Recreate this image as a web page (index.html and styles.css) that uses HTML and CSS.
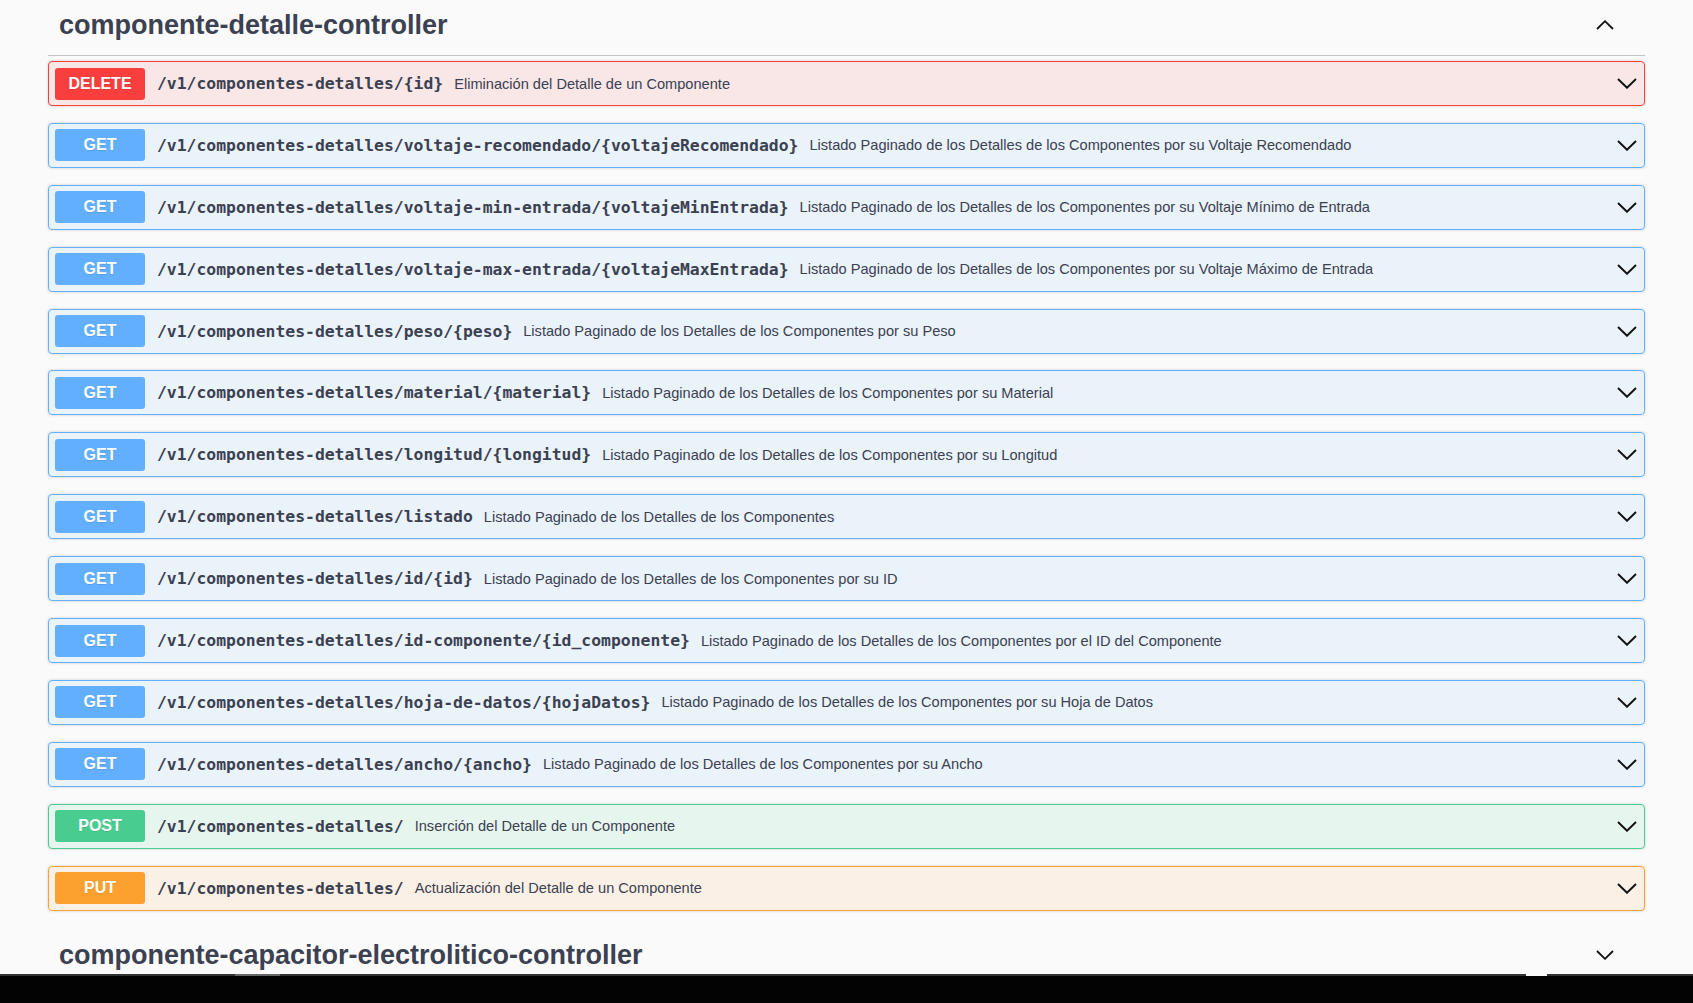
FILE: index.html
```html
<!DOCTYPE html>
<html lang="es">
<head>
<meta charset="utf-8">
<title>componente-detalle-controller</title>
<link rel="stylesheet" href="styles.css">
</head>
<body>
<div class="screen">
  <main class="page">
    <section class="tag">
      <h3 class="tag-head">
        <span class="tag-name">componente-detalle-controller</span>
        <svg class="tag-arrow" viewBox="0 0 18 10" width="18" height="10"><polyline points="1,9 9,1.2 17,9" fill="none" stroke="#111" stroke-width="1.8"/></svg>
      </h3>
      <div class="ops">
        <div class="op op-delete"><span class="method">DELETE</span><span class="path">/v1/componentes-detalles/{id}</span><span class="desc">Eliminación del Detalle de un Componente</span><svg class="op-arrow" viewBox="0 0 20 11" width="20" height="11"><polyline points="1,1 10,9.8 19,1" fill="none" stroke="#111" stroke-width="1.9"/></svg></div>
        <div class="op op-get"><span class="method">GET</span><span class="path">/v1/componentes-detalles/voltaje-recomendado/{voltajeRecomendado}</span><span class="desc">Listado Paginado de los Detalles de los Componentes por su Voltaje Recomendado</span><svg class="op-arrow" viewBox="0 0 20 11" width="20" height="11"><polyline points="1,1 10,9.8 19,1" fill="none" stroke="#111" stroke-width="1.9"/></svg></div>
        <div class="op op-get"><span class="method">GET</span><span class="path">/v1/componentes-detalles/voltaje-min-entrada/{voltajeMinEntrada}</span><span class="desc">Listado Paginado de los Detalles de los Componentes por su Voltaje Mínimo de Entrada</span><svg class="op-arrow" viewBox="0 0 20 11" width="20" height="11"><polyline points="1,1 10,9.8 19,1" fill="none" stroke="#111" stroke-width="1.9"/></svg></div>
        <div class="op op-get"><span class="method">GET</span><span class="path">/v1/componentes-detalles/voltaje-max-entrada/{voltajeMaxEntrada}</span><span class="desc">Listado Paginado de los Detalles de los Componentes por su Voltaje Máximo de Entrada</span><svg class="op-arrow" viewBox="0 0 20 11" width="20" height="11"><polyline points="1,1 10,9.8 19,1" fill="none" stroke="#111" stroke-width="1.9"/></svg></div>
        <div class="op op-get"><span class="method">GET</span><span class="path">/v1/componentes-detalles/peso/{peso}</span><span class="desc">Listado Paginado de los Detalles de los Componentes por su Peso</span><svg class="op-arrow" viewBox="0 0 20 11" width="20" height="11"><polyline points="1,1 10,9.8 19,1" fill="none" stroke="#111" stroke-width="1.9"/></svg></div>
        <div class="op op-get"><span class="method">GET</span><span class="path">/v1/componentes-detalles/material/{material}</span><span class="desc">Listado Paginado de los Detalles de los Componentes por su Material</span><svg class="op-arrow" viewBox="0 0 20 11" width="20" height="11"><polyline points="1,1 10,9.8 19,1" fill="none" stroke="#111" stroke-width="1.9"/></svg></div>
        <div class="op op-get"><span class="method">GET</span><span class="path">/v1/componentes-detalles/longitud/{longitud}</span><span class="desc">Listado Paginado de los Detalles de los Componentes por su Longitud</span><svg class="op-arrow" viewBox="0 0 20 11" width="20" height="11"><polyline points="1,1 10,9.8 19,1" fill="none" stroke="#111" stroke-width="1.9"/></svg></div>
        <div class="op op-get"><span class="method">GET</span><span class="path">/v1/componentes-detalles/listado</span><span class="desc">Listado Paginado de los Detalles de los Componentes</span><svg class="op-arrow" viewBox="0 0 20 11" width="20" height="11"><polyline points="1,1 10,9.8 19,1" fill="none" stroke="#111" stroke-width="1.9"/></svg></div>
        <div class="op op-get"><span class="method">GET</span><span class="path">/v1/componentes-detalles/id/{id}</span><span class="desc">Listado Paginado de los Detalles de los Componentes por su ID</span><svg class="op-arrow" viewBox="0 0 20 11" width="20" height="11"><polyline points="1,1 10,9.8 19,1" fill="none" stroke="#111" stroke-width="1.9"/></svg></div>
        <div class="op op-get"><span class="method">GET</span><span class="path">/v1/componentes-detalles/id-componente/{id_componente}</span><span class="desc">Listado Paginado de los Detalles de los Componentes por el ID del Componente</span><svg class="op-arrow" viewBox="0 0 20 11" width="20" height="11"><polyline points="1,1 10,9.8 19,1" fill="none" stroke="#111" stroke-width="1.9"/></svg></div>
        <div class="op op-get"><span class="method">GET</span><span class="path">/v1/componentes-detalles/hoja-de-datos/{hojaDatos}</span><span class="desc">Listado Paginado de los Detalles de los Componentes por su Hoja de Datos</span><svg class="op-arrow" viewBox="0 0 20 11" width="20" height="11"><polyline points="1,1 10,9.8 19,1" fill="none" stroke="#111" stroke-width="1.9"/></svg></div>
        <div class="op op-get"><span class="method">GET</span><span class="path">/v1/componentes-detalles/ancho/{ancho}</span><span class="desc">Listado Paginado de los Detalles de los Componentes por su Ancho</span><svg class="op-arrow" viewBox="0 0 20 11" width="20" height="11"><polyline points="1,1 10,9.8 19,1" fill="none" stroke="#111" stroke-width="1.9"/></svg></div>
        <div class="op op-post"><span class="method">POST</span><span class="path">/v1/componentes-detalles/</span><span class="desc">Inserción del Detalle de un Componente</span><svg class="op-arrow" viewBox="0 0 20 11" width="20" height="11"><polyline points="1,1 10,9.8 19,1" fill="none" stroke="#111" stroke-width="1.9"/></svg></div>
        <div class="op op-put"><span class="method">PUT</span><span class="path">/v1/componentes-detalles/</span><span class="desc">Actualización del Detalle de un Componente</span><svg class="op-arrow" viewBox="0 0 20 11" width="20" height="11"><polyline points="1,1 10,9.8 19,1" fill="none" stroke="#111" stroke-width="1.9"/></svg></div>
      </div>
    </section>
    <section class="tag">
      <h3 class="tag-head">
        <span class="tag-name">componente-capacitor-electrolitico-controller</span>
        <svg class="tag-arrow" viewBox="0 0 18 10" width="18" height="10"><polyline points="1,1 9,8.8 17,1" fill="none" stroke="#111" stroke-width="1.8"/></svg>
      </h3>
    </section>
  </main>
  <div class="bar">
    <div class="bar-line">
      <span class="seg seg-a"></span><span class="seg seg-b"></span><span class="seg seg-c"></span><span class="seg seg-d"></span><span class="seg seg-e"></span>
    </div>
  </div>
</div>
</body>
</html>
```

FILE: styles.css
```css
html, body {
  margin: 0;
  padding: 0;
  background: #fafafa;
}

.screen {
  display: flex;
  flex-direction: column;
  height: 1003px;
  overflow: hidden;
}

.page {
  flex: 0 0 974px;
  overflow: hidden;
  padding: 0 48px 0 48px;
  box-sizing: border-box;
  color: #3b4151;
  font-family: "Liberation Sans", Arial, sans-serif;
}

.tag {
  margin-bottom: 2.4px;
}

.tag-head {
  display: flex;
  align-items: center;
  margin: 0 0 5px;
  padding: 10px 23px 15px 11px;
  height: 30px;
  border-bottom: 1px solid rgba(59, 65, 81, 0.3);
  font-size: 27px;
  line-height: 30px;
  font-weight: 700;
  color: #3b4151;
}

.tag-name {
  flex: 1 1 auto;
}

.tag-arrow {
  flex: 0 0 auto;
  margin-right: 8px;
}

.ops {
  display: flex;
  flex-direction: column;
}

.op {
  display: flex;
  align-items: center;
  box-sizing: border-box;
  height: 45px;
  padding: 5.5px 6px;
  margin-bottom: 16.9px;
  border: 1px solid;
  border-radius: 4px;
  box-shadow: 0 0 3px rgba(0, 0, 0, 0.19);
}

.method {
  flex: 0 0 90px;
  height: 32px;
  line-height: 32px;
  text-align: center;
  border-radius: 3px;
  color: #fff;
  font-family: "Liberation Sans", Arial, sans-serif;
  font-weight: 700;
  font-size: 16px;
  text-shadow: 0 1px 0 rgba(0, 0, 0, 0.1);
}

.path {
  margin-left: 12px;
  font-family: "DejaVu Sans Mono", monospace;
  font-weight: 600;
  font-size: 16.4px;
  color: #3b4151;
  white-space: nowrap;
}

.desc {
  flex: 1 1 auto;
  margin-left: 11px;
  font-size: 14.6px;
  color: #3b4151;
  white-space: nowrap;
}

.op-arrow {
  flex: 0 0 auto;
  margin-right: 1px;
}

.op-delete {
  border-color: #f93e3e;
  background: rgba(249, 62, 62, 0.1);
}
.op-delete .method { background: #f93e3e; }

.op-get {
  border-color: #61affe;
  background: rgba(97, 175, 254, 0.1);
}
.op-get .method { background: #61affe; }

.op-post {
  border-color: #49cc90;
  background: rgba(73, 204, 144, 0.1);
}
.op-post .method { background: #49cc90; }

.op-put {
  border-color: #fca130;
  background: rgba(252, 161, 48, 0.1);
}
.op-put .method { background: #fca130; }

.bar {
  flex: 1 1 auto;
  background: #030303;
}

.bar-line {
  display: flex;
  height: 2px;
}

.seg { display: block; height: 2px; }
.seg-a { flex: 0 0 235px; background: #333; }
.seg-b { flex: 0 0 45px; background: #666; }
.seg-c { flex: 0 0 1246px; background: #333; }
.seg-d { flex: 0 0 21px; background: #fafafa; }
.seg-e { flex: 1 1 auto; background: #333; }
```
